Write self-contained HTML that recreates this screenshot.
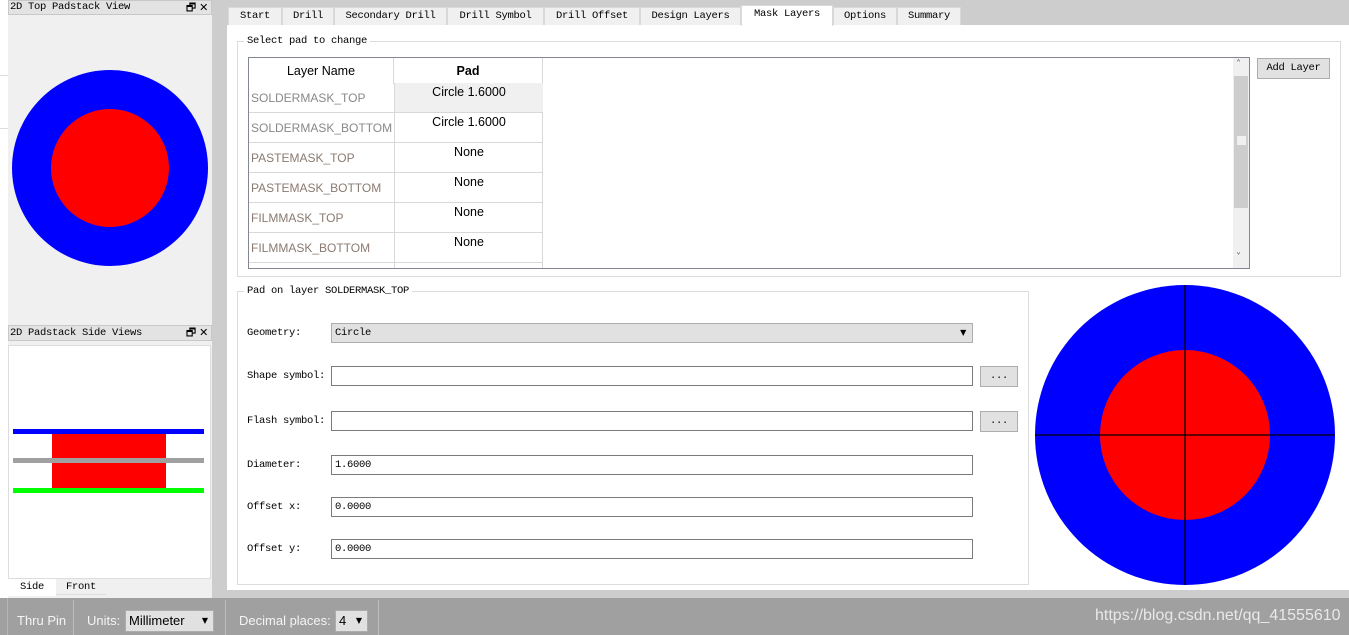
<!DOCTYPE html>
<html><head><meta charset="utf-8"><style>
*{box-sizing:border-box;margin:0;padding:0}
body{width:1349px;height:635px;overflow:hidden;background:#cdcdcd;position:relative;font-family:"Liberation Mono","Noto Serif CJK SC",monospace;font-size:11px;color:#000}
.a{position:absolute}
.m{font-family:"Liberation Mono",monospace;font-size:10.5px;letter-spacing:-0.3px}
.s{font-family:"Liberation Sans",sans-serif;font-size:12.5px}
.tab{position:absolute;top:7px;height:18px;background:#f0f0f0;border:1px solid #d9d9d9;border-bottom:none;text-align:center;line-height:17px}
.inp{position:absolute;left:331px;width:642px;height:20px;border:1px solid #7a7a7a;background:#fff;padding-left:3px;line-height:18px}
.btn{position:absolute;left:980px;width:38px;height:21px;border:1px solid #adadad;background:#e1e1e1;text-align:center;line-height:18px}
.lbl{position:absolute;left:247px}
.row{position:absolute;left:249px;width:294px;height:30px;border-bottom:1px solid #d8d8d8}
.row .n{position:absolute;left:2px;top:8px;color:#8a7a70;width:142px;font-size:12px;white-space:nowrap;overflow:hidden}
.row .p{position:absolute;left:145px;top:0;width:149px;height:29px;border-left:1px solid #d8d8d8;text-align:center;padding-top:2px}
</style></head><body>
<div class="a" style="left:0;top:0;width:8px;height:598px;background:#fff"></div>
<div class="a" style="left:0;top:75px;width:8px;height:1px;background:#ddd"></div>
<div class="a" style="left:0;top:128px;width:8px;height:1px;background:#ddd"></div>
<div class="a" style="left:8px;top:0;width:204px;height:320px;background:#f0f0f0"></div>
<div class="a m" style="left:8px;top:0;width:204px;height:15px;background:#e3e3e3;border:1px solid #c8c8c8;padding-left:1px;line-height:13px">2D Top Padstack View<span style="position:absolute;right:3px;top:0;font-family:'DejaVu Sans';font-size:11px">🗗 ✕</span></div>
<svg class="a" style="left:8px;top:60px" width="204" height="220"><circle cx="102" cy="108" r="98" fill="#0000ff"/><circle cx="102" cy="108" r="59" fill="#ff0000"/></svg>
<div class="a" style="left:8px;top:320px;width:204px;height:278px;background:#f0f0f0"></div>
<div class="a m" style="left:8px;top:325px;width:204px;height:16px;background:#e3e3e3;border:1px solid #c8c8c8;padding-left:1px;line-height:14px">2D Padstack Side Views<span style="position:absolute;right:3px;top:0;font-family:'DejaVu Sans';font-size:11px">🗗 ✕</span></div>
<div class="a" style="left:8px;top:345px;width:203px;height:234px;background:#fff;border:1px solid #ddd"></div>
<div class="a" style="left:52px;top:430px;width:114px;height:59px;background:#f00"></div>
<div class="a" style="left:13px;top:429px;width:191px;height:5px;background:#00f"></div>
<div class="a" style="left:13px;top:458px;width:191px;height:5px;background:#a0a0a0"></div>
<div class="a" style="left:13px;top:488px;width:191px;height:5px;background:#0f0"></div>
<div class="a m" style="left:8px;top:579px;width:48px;height:17px;background:#fff;text-align:center;line-height:17px">Side</div>
<div class="a m" style="left:56px;top:579px;width:50px;height:16px;text-align:center;line-height:16px;border-bottom:1px solid #ddd">Front</div>
<div class="a" style="left:227px;top:25px;width:1122px;height:565px;background:#fff"></div>
<div class="tab m" style="left:228px;width:54px">Start</div>
<div class="tab m" style="left:282px;width:52px">Drill</div>
<div class="tab m" style="left:334px;width:113px">Secondary Drill</div>
<div class="tab m" style="left:447px;width:97px">Drill Symbol</div>
<div class="tab m" style="left:544px;width:96px">Drill Offset</div>
<div class="tab m" style="left:640px;width:101px">Design Layers</div>
<div class="tab m" style="left:741px;top:5px;height:21px;width:92px;background:#fff">Mask Layers</div>
<div class="tab m" style="left:833px;width:64px">Options</div>
<div class="tab m" style="left:897px;width:64px">Summary</div>
<div class="a" style="left:237px;top:41px;width:1104px;height:236px;border:1px solid #dcdcdc"></div>
<div class="a m" style="left:244px;top:35px;background:#fff;padding:0 3px">Select pad to change</div>
<div class="a" style="left:248px;top:57px;width:1002px;height:212px;border:1px solid #828790;background:#fff;overflow:hidden">
 <div class="a s" style="left:0;top:0;width:145px;height:26px;text-align:center;line-height:26px;border-right:1px solid #d8d8d8">Layer Name</div>
 <div class="a s" style="left:145px;top:0;width:149px;height:26px;text-align:center;line-height:26px;font-weight:bold;border-right:1px solid #d8d8d8">Pad</div>
 <div class="a" style="left:0;top:26px;width:294px;height:200px;border-right:1px solid #d8d8d8"></div>
 <div class="a" style="left:984px;top:0;width:16px;height:210px;background:#f0f0f0"></div>
 <div class="a" style="left:985px;top:18px;width:14px;height:132px;background:#cdcdcd"></div>
 <div class="a" style="left:988px;top:78px;width:9px;height:9px;background:#f0f0f0"></div>
 <div class="a" style="left:987px;top:1px;font-size:10px;color:#606060;font-family:'DejaVu Sans'">˄</div>
 <div class="a" style="left:987px;top:194px;font-size:10px;color:#606060;font-family:'DejaVu Sans'">˅</div>
</div>
<div class="row s" style="top:83px"><div class="n" style="color:#888">SOLDERMASK_TOP</div><div class="p" style="background:#f0f0f0">Circle 1.6000</div></div>
<div class="row s" style="top:113px"><div class="n" style="color:#888">SOLDERMASK_BOTTOM</div><div class="p">Circle 1.6000</div></div>
<div class="row s" style="top:143px"><div class="n">PASTEMASK_TOP</div><div class="p">None</div></div>
<div class="row s" style="top:173px"><div class="n">PASTEMASK_BOTTOM</div><div class="p">None</div></div>
<div class="row s" style="top:203px"><div class="n">FILMMASK_TOP</div><div class="p">None</div></div>
<div class="row s" style="top:233px"><div class="n">FILMMASK_BOTTOM</div><div class="p">None</div></div>
<div class="a" style="left:249px;top:263px;width:294px;height:5px;border-right:1px solid #d8d8d8"><div class="a" style="left:145px;top:0;width:1px;height:5px;background:#d8d8d8"></div></div>
<div class="a" style="left:248px;top:267px;width:1002px;height:2px;border-bottom:1px solid #828790"></div>
<div class="a m" style="left:1257px;top:58px;width:73px;height:21px;border:1px solid #adadad;background:#e1e1e1;text-align:center;line-height:19px">Add Layer</div>
<div class="a" style="left:237px;top:291px;width:792px;height:294px;border:1px solid #dcdcdc"></div>
<div class="a m" style="left:244px;top:285px;background:#fff;padding:0 3px">Pad on layer SOLDERMASK_TOP</div>
<div class="lbl m" style="top:327px">Geometry:</div>
<div class="inp m" style="top:323px;background:#e1e1e1;border-color:#adadad">Circle<span style="position:absolute;right:6px;top:0;font-size:8px;font-family:'DejaVu Sans'">▼</span></div>
<div class="lbl m" style="top:370px">Shape symbol:</div>
<div class="inp" style="top:366px"></div><div class="btn m" style="top:366px">...</div>
<div class="lbl m" style="top:415px">Flash symbol:</div>
<div class="inp" style="top:411px"></div><div class="btn m" style="top:411px">...</div>
<div class="lbl m" style="top:459px">Diameter:</div>
<div class="inp m" style="top:455px">1.6000</div>
<div class="lbl m" style="top:501px">Offset x:</div>
<div class="inp m" style="top:497px">0.0000</div>
<div class="lbl m" style="top:543px">Offset y:</div>
<div class="inp m" style="top:539px">0.0000</div>
<svg class="a" style="left:1035px;top:285px" width="300" height="300"><circle cx="150" cy="150" r="150" fill="#0000ff"/><circle cx="150" cy="150" r="85" fill="#ff0000"/><line x1="150" y1="0" x2="150" y2="300" stroke="#000" stroke-width="1.3"/><line x1="0" y1="150" x2="300" y2="150" stroke="#000" stroke-width="1.3"/></svg>
<div class="a s" style="left:0;top:598px;width:1349px;height:37px;background:#a0a0a0;color:#f4f4f4;font-size:13px">
 <div class="a" style="left:7px;top:0;width:1px;height:37px;background:#b5b5b5"></div>
 <div class="a" style="left:17px;top:15px">Thru Pin</div>
 <div class="a" style="left:73px;top:2px;width:1px;height:35px;background:#bdbdbd"></div>
 <div class="a" style="left:87px;top:15px">Units:</div>
 <div class="a" style="left:125px;top:12px;width:89px;height:22px;background:#e1e1e1;border:1px solid #adadad;color:#000;padding:2px 3px">Millimeter<span style="position:absolute;right:5px;top:5px;font-size:8px;font-family:'DejaVu Sans'">▼</span></div>
 <div class="a" style="left:225px;top:2px;width:1px;height:35px;background:#bdbdbd"></div>
 <div class="a" style="left:239px;top:15px">Decimal places:</div>
 <div class="a" style="left:335px;top:12px;width:33px;height:22px;background:#e1e1e1;border:1px solid #adadad;color:#000;padding:2px 3px">4<span style="position:absolute;right:5px;top:5px;font-size:8px;font-family:'DejaVu Sans'">▼</span></div>
 <div class="a" style="left:378px;top:2px;width:1px;height:35px;background:#bdbdbd"></div>
 <div class="a" style="left:1095px;top:9px;font-size:16px;color:#e8e8e8">https://blog.csdn.net/qq_41555610</div>
</div>
</body></html>
